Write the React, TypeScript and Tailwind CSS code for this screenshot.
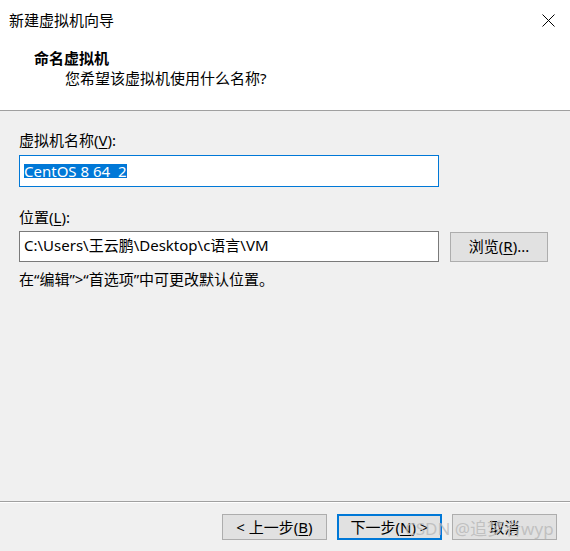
import React from "react";

const font = { fontFamily: '"Noto Sans", "Noto Sans CJK SC", sans-serif' };

// 带下划线的快捷键字母
const Key = ({ k }: { k: string }) => <span className="underline underline-offset-2">{k}</span>;

const Btn = ({ children, primary }: { children: React.ReactNode; primary?: boolean }) => (
  <div
    className={`flex h-[26px] w-[105px] items-center justify-center bg-[#e1e1e1] text-[15px] leading-none text-black ${
      primary ? "border-2 border-[#0078d7]" : "border border-[#adadad]"
    }`}
  >
    {children}
  </div>
);

const App = () => {
  return (
    <div className="relative flex h-[551px] w-[570px] flex-col bg-[#f0f0f0] text-black" style={font}>
      {/* 标题 + 页头 */}
      <div className="h-[111px] border-b border-[#a0a0a0] bg-white">
        <div className="flex h-[40px] items-center justify-between pl-[9px] pr-[15px]">
          <span className="text-[15px] leading-[20px]">新建虚拟机向导</span>
          <svg width="13" height="13" viewBox="0 0 13 13">
            <path d="M0.5 0.5 L12.5 12.5 M12.5 0.5 L0.5 12.5" stroke="#000" strokeWidth="1" />
          </svg>
        </div>
        <div className="mt-[8px] pl-[34px] text-[15px] font-bold leading-[20px]">命名虚拟机</div>
        <div className="pl-[65px] text-[15px] leading-[20px]">您希望该虚拟机使用什么名称?</div>
      </div>

      {/* 表单 */}
      <div className="flex flex-col px-[19px]">
        <div className="mt-[20px] text-[15px] leading-[18px]">
          虚拟机名称(<Key k="V" />):
        </div>
        <div className="mt-[6px] flex h-[32px] w-[420px] items-center border border-[#0078d7] bg-white pl-[4px]">
          <span className="bg-[#0078d7] text-[15px] leading-[14px] text-white whitespace-pre">CentOS 8 64  2</span>
        </div>

        <div className="mt-[21px] text-[15px] leading-[18px]">
          位置(<Key k="L" />):
        </div>
        <div className="mt-[5px] flex items-center gap-[11px]">
          <div className="flex h-[31px] w-[420px] items-center border border-[#7a7a7a] bg-white pb-[4px] pl-[4px] text-[15px] leading-[18px]">
            C:\Users\王云鹏\Desktop\c语言\VM
          </div>
          <div className="flex h-[30px] w-[98px] items-center justify-center border border-[#adadad] bg-[#e1e1e1] text-[15px] leading-none">
            浏览(<Key k="R" />)...
          </div>
        </div>
        <div className="mt-[8px] text-[15px] leading-[18px]">在“编辑”&gt;“首选项”中可更改默认位置。</div>
      </div>

      <div className="flex-1" />

      {/* 底部按钮 */}
      <div className="h-[2px] border-t border-b border-t-[#a0a0a0] border-b-white" />
      <div className="flex justify-end gap-[10px] pb-[11px] pr-[13px] pt-[11px]">
        <Btn>
          &lt; 上一步(<Key k="B" />)
        </Btn>
        <Btn primary>
          下一步(<Key k="N" />) &gt;
        </Btn>
        <Btn>取消</Btn>
      </div>

      {/* 水印 */}
      <div className="pointer-events-none absolute left-[405px] top-[519px] text-[17px] leading-[20px] text-[#b8b8b8]/80">
        CSDN @追梦者wyp
      </div>
    </div>
  );
};

export default App;
